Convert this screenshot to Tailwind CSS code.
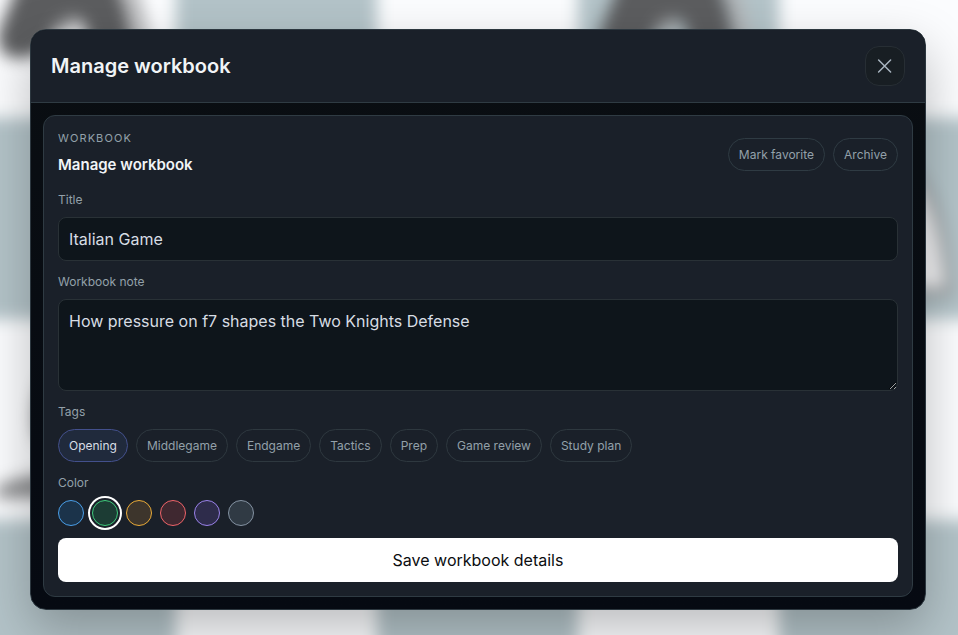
<!DOCTYPE html>
<html lang="en">

<head>
    <meta charset="UTF-8">
    <meta name="viewport" content="width=device-width, initial-scale=1.0">
    <title>Manage workbook</title>
    <script src="https://cdn.jsdelivr.net/npm/@tailwindcss/browser@4"></script>
</head>

<body class="relative min-h-screen overflow-hidden bg-[#fafbfd] font-['Inter',sans-serif] text-[#d7dde4]">
    <!-- blurred board behind the dialog -->
    <svg class="absolute left-0 top-0 h-full w-full overflow-visible blur-[8px]" aria-hidden="true">
        <defs>
            <pattern id="board" x="-25" y="-83" width="402" height="402" patternUnits="userSpaceOnUse">
                <rect width="402" height="402" fill="#fbfcfe" />
                <rect x="201" width="201" height="201" fill="#b3c3c8" />
                <rect y="201" width="201" height="201" fill="#b3c3c8" />
            </pattern>
        </defs>
        <rect x="-60" y="-60" width="120%" height="120%" fill="url(#board)" />
        <g id="knight">
            <path d="M128 -20Q142 20 148 70" fill="none" stroke="#b2b3b5" stroke-width="12" />
            <path d="M24 -30H108C126 -5 132 25 136 70H94L84 26C76 12 60 18 54 34C44 52 36 58 18 58C0 58 -6 42 2 24Z" fill="#5c5d5f" />
            <ellipse cx="66" cy="26" rx="10" ry="7" fill="#9a9b9d" />
        </g>
        <use href="#knight" x="601" />
        <path d="M890 155C930 175 944 225 949 292H890" fill="#f3f3f5" stroke="#989c9e" stroke-width="8" />
        <path d="M-4 488Q15 476 50 474V498H-4Z" fill="#8c8d8f" />
        <path d="M50 370Q27 400 37 440H50Z" fill="#8c8d8f" />
    </svg>

    <div class="relative pb-[25px] pl-[30px] pr-8 pt-[29px]">
        <section role="dialog" aria-labelledby="dialog-title"
            class="overflow-hidden rounded-2xl border border-[#2c373f] bg-linear-to-b from-[#0a0e12] to-[#060a12] shadow-[0_20px_50px_rgba(0,0,0,0.25)]">
            <header class="flex items-center justify-between border-b border-[#2f3b43] bg-[#1a2029] px-5 py-4">
                <h1 id="dialog-title" class="text-xl font-semibold text-[#f1f4f6]">Manage workbook</h1>
                <button type="button" aria-label="Close"
                    class="flex size-10 items-center justify-center rounded-[14px] border border-[#272e34] bg-[#181e23] text-[#a9b5c0]">
                    <svg class="size-5" viewBox="0 0 20 20" fill="none" stroke="currentColor" stroke-width="1.5"
                        stroke-linecap="round">
                        <path d="M3.6 4l12 12M15.6 4l-12 12" />
                    </svg>
                </button>
            </header>

            <div class="p-3">
                <form class="flex flex-col gap-3 rounded-xl border border-[#2f3b43] bg-[#1a2029] p-[14px]">
                    <div class="flex items-center justify-between">
                        <div class="flex flex-col gap-1">
                            <p class="text-[11px] leading-[17px] tracking-widest text-[#93a0a9]">WORKBOOK</p>
                            <h2 class="text-[15px] leading-7 font-semibold text-[#f1f4f6]">Manage workbook</h2>
                        </div>
                        <div class="flex gap-2 text-xs text-[#93a0a9]">
                            <button type="button" class="h-[33px] rounded-full border border-[#2f3b43] px-[10px]">Mark favorite</button>
                            <button type="button" class="h-[33px] rounded-full border border-[#2f3b43] px-[10px]">Archive</button>
                        </div>
                    </div>

                    <div class="flex flex-col gap-2">
                        <label for="title" class="text-xs leading-[18px] text-[#93a0a9]">Title</label>
                        <input id="title" type="text" value="Italian Game"
                            class="h-11 w-full rounded-lg border border-[#293136] bg-[#0e151b] px-[10px] text-base">
                    </div>

                    <div class="flex flex-col gap-2">
                        <label for="note" class="text-xs leading-[18px] text-[#93a0a9]">Workbook note</label>
                        <textarea id="note"
                            class="block h-[92px] w-full resize rounded-lg border border-[#293136] bg-[#0e151b] p-[10px] text-base leading-[22px]">How pressure on f7 shapes the Two Knights Defense</textarea>
                    </div>

                    <div class="flex flex-col gap-2">
                        <p id="tags-label" class="text-xs leading-[18px] text-[#93a0a9]">Tags</p>
                        <div role="group" aria-labelledby="tags-label" class="flex flex-wrap gap-2 text-xs text-[#93a0a9]">
                            <button type="button" aria-pressed="true"
                                class="h-[33px] rounded-full border border-[#43508c] bg-[#202a3c] px-[10px] text-[#d7dde4]">Opening</button>
                            <button type="button" class="h-[33px] rounded-full border border-[#2e383f] px-[10px]">Middlegame</button>
                            <button type="button" class="h-[33px] rounded-full border border-[#2e383f] px-[10px]">Endgame</button>
                            <button type="button" class="h-[33px] rounded-full border border-[#2e383f] px-[10px]">Tactics</button>
                            <button type="button" class="h-[33px] rounded-full border border-[#2e383f] px-[10px]">Prep</button>
                            <button type="button" class="h-[33px] rounded-full border border-[#2e383f] px-[10px]">Game review</button>
                            <button type="button" class="h-[33px] rounded-full border border-[#2e383f] px-[10px]">Study plan</button>
                        </div>
                    </div>

                    <div class="flex flex-col gap-2">
                        <p id="color-label" class="text-xs leading-[18px] text-[#93a0a9]">Color</p>
                        <div role="radiogroup" aria-labelledby="color-label" class="flex gap-2">
                            <input type="radio" name="color" aria-label="Blue"
                                class="size-[26px] appearance-none rounded-full border border-[#4a9fe8] bg-[#1b334a] checked:outline-2 checked:outline-offset-2 checked:outline-white">
                            <input type="radio" name="color" aria-label="Green" checked
                                class="size-[26px] appearance-none rounded-full border border-[#3fcb7c] bg-[#1c3c34] checked:outline-2 checked:outline-offset-2 checked:outline-white">
                            <input type="radio" name="color" aria-label="Amber"
                                class="size-[26px] appearance-none rounded-full border border-[#eaab38] bg-[#3d352c] checked:outline-2 checked:outline-offset-2 checked:outline-white">
                            <input type="radio" name="color" aria-label="Red"
                                class="size-[26px] appearance-none rounded-full border border-[#ef6469] bg-[#3f2830] checked:outline-2 checked:outline-offset-2 checked:outline-white">
                            <input type="radio" name="color" aria-label="Purple"
                                class="size-[26px] appearance-none rounded-full border border-[#9a82ea] bg-[#2e2c4b] checked:outline-2 checked:outline-offset-2 checked:outline-white">
                            <input type="radio" name="color" aria-label="Gray"
                                class="size-[26px] appearance-none rounded-full border border-[#8593a3] bg-[#303a44] checked:outline-2 checked:outline-offset-2 checked:outline-white">
                        </div>
                    </div>

                    <button type="submit" class="h-11 w-full rounded-lg bg-white text-base text-[#0b0d10]">Save workbook details</button>
                </form>
            </div>
        </section>
    </div>
</body>

</html>
